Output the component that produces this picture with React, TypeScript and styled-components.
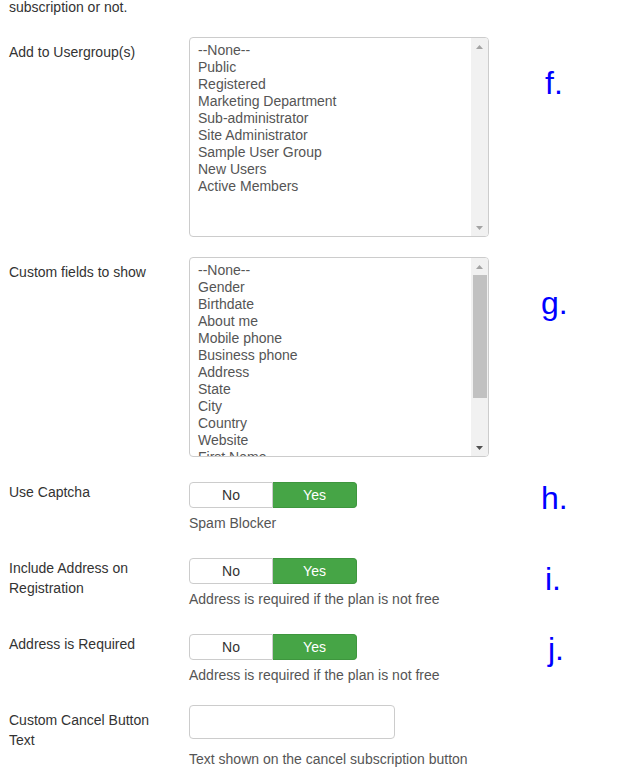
import React from 'react';
import styled, { createGlobalStyle } from 'styled-components';

const GlobalStyle = createGlobalStyle`
  body {
    margin: 0;
    background: #fff;
    font-family: 'Liberation Sans', Arial, sans-serif;
    font-size: 14px;
    color: #333;
  }
`;

const usergroups = [
  '--None--',
  'Public',
  'Registered',
  'Marketing Department',
  'Sub-administrator',
  'Site Administrator',
  'Sample User Group',
  'New Users',
  'Active Members',
];

// only the options that show inside the box; the rest sit below the scroll
const customFields = [
  '--None--',
  'Gender',
  'Birthdate',
  'About me',
  'Mobile phone',
  'Business phone',
  'Address',
  'State',
  'City',
  'Country',
  'Website',
  'First Name',
];

interface ListBoxProps {
  items: string[];
  thumb?: { top: number; height: number };
}

const ListBox: React.FC<ListBoxProps> = ({ items, thumb }) => (
  <ListFrame>
    <ListItems>
      {items.map((item) => (
        <ListItem key={item}>{item}</ListItem>
      ))}
    </ListItems>
    <ScrollBar>
      <ScrollArrow>
        <svg width="7" height="4" viewBox="0 0 7 4">
          <polygon points="0,4 3.5,0 7,4" fill="#a3a3a3" />
        </svg>
      </ScrollArrow>
      <ScrollTrack>
        {thumb && (
          <ScrollThumb style={{ marginTop: thumb.top, height: thumb.height }} />
        )}
      </ScrollTrack>
      <ScrollArrow>
        <svg width="7" height="4" viewBox="0 0 7 4">
          <polygon points="0,0 7,0 3.5,4" fill={thumb ? '#505050' : '#a3a3a3'} />
        </svg>
      </ScrollArrow>
    </ScrollBar>
  </ListFrame>
);

const Toggle: React.FC = () => (
  <ToggleGroup>
    <ToggleButton>No</ToggleButton>
    <ToggleButton $active>Yes</ToggleButton>
  </ToggleGroup>
);

const App: React.FC = () => (
  <Page>
    <GlobalStyle />
    <LeadLine>subscription or not.</LeadLine>

    <Row $gap={20}>
      <Label $pad={5}>Add to Usergroup(s)</Label>
      <Control>
        <ListBox items={usergroups} />
      </Control>
      <Mark $top={31} $left={56}>f.</Mark>
    </Row>

    <Row $gap={25}>
      <Label $pad={5}>Custom fields to show</Label>
      <Control>
        <ListBox items={customFields} thumb={{ top: 0, height: 123 }} />
      </Control>
      <Mark $top={31} $left={52}>g.</Mark>
    </Row>

    <Row $gap={25}>
      <Label $pad={0}>Use Captcha</Label>
      <Control>
        <Toggle />
        <Help $mt={5}>Spam Blocker</Help>
      </Control>
      <Mark $top={1} $left={52}>h.</Mark>
    </Row>

    <Row $gap={25}>
      <Label $pad={0}>Include Address on Registration</Label>
      <Control>
        <Toggle />
        <Help $mt={5}>Address is required if the plan is not free</Help>
      </Control>
      <Mark $top={6} $left={56}>i.</Mark>
    </Row>

    <Row $gap={20}>
      <Label $pad={0}>Address is Required</Label>
      <Control>
        <Toggle />
        <Help $mt={5}>Address is required if the plan is not free</Help>
      </Control>
      <Mark $top={0} $left={59}>j.</Mark>
    </Row>

    <Row $gap={0}>
      <Label $pad={5}>Custom Cancel Button Text</Label>
      <Control>
        <TextInput type="text" />
        <Help $mt={10}>Text shown on the cancel subscription button</Help>
      </Control>
    </Row>
  </Page>
);

export default App;

const Page = styled.div`
  padding-left: 9px;
  width: 624px;
  height: 775px;
  overflow: hidden;
`;

const LeadLine = styled.div`
  margin-top: -3px;
  line-height: 20px;
  margin-bottom: 20px;
  color: #333;
`;

const Row = styled.div<{ $gap: number }>`
  display: flex;
  align-items: flex-start;
  margin-bottom: ${(p) => p.$gap}px;
`;

const Label = styled.div<{ $pad: number }>`
  width: 160px;
  padding-right: 20px;
  padding-top: ${(p) => p.$pad}px;
  line-height: 20px;
  color: #333;
  flex-shrink: 0;
`;

const Control = styled.div`
  width: 300px;
  flex-shrink: 0;
  display: flex;
  flex-direction: column;
  align-items: flex-start;
`;

const Mark = styled.div<{ $top: number; $left: number }>`
  margin-top: ${(p) => p.$top}px;
  margin-left: ${(p) => p.$left}px;
  font-size: 32px;
  line-height: 31px;
  color: #0000ff;
`;

const ListFrame = styled.div`
  box-sizing: border-box;
  width: 300px;
  height: 200px;
  border: 1px solid #ccc;
  border-radius: 4px;
  display: flex;
  overflow: hidden;
  background: #fff;
`;

const ListItems = styled.div`
  flex: 1;
  padding: 4px 8px 0;
  overflow: hidden;
  color: #555;
`;

const ListItem = styled.div`
  line-height: 17px;
  white-space: nowrap;
`;

const ScrollBar = styled.div`
  width: 17px;
  background: #f1f1f1;
  display: flex;
  flex-direction: column;
`;

const ScrollArrow = styled.div`
  height: 17px;
  display: flex;
  align-items: center;
  justify-content: center;
`;

const ScrollTrack = styled.div`
  flex: 1;
  display: flex;
  flex-direction: column;
  align-items: center;
`;

const ScrollThumb = styled.div`
  width: 14px;
  background: #c1c1c1;
`;

const ToggleGroup = styled.div`
  display: flex;
  height: 26px;
`;

const ToggleButton = styled.div<{ $active?: boolean }>`
  box-sizing: border-box;
  width: 84px;
  height: 26px;
  display: flex;
  align-items: center;
  justify-content: center;
  font-size: 14px;
  border: 1px solid ${(p) => (p.$active ? '#3e963e' : '#ccc')};
  background: ${(p) => (p.$active ? '#46a546' : '#fff')};
  color: ${(p) => (p.$active ? '#fff' : '#333')};
  border-radius: ${(p) => (p.$active ? '0 4px 4px 0' : '4px 0 0 4px')};
  ${(p) => (p.$active ? 'border-left: none;' : '')}
`;

const Help = styled.div<{ $mt: number }>`
  margin-top: ${(p) => p.$mt}px;
  line-height: 20px;
  color: #555;
`;

const TextInput = styled.input`
  box-sizing: border-box;
  width: 206px;
  height: 34px;
  margin: 0;
  padding: 4px 6px;
  border: 1px solid #ccc;
  border-radius: 4px;
  font-family: 'Liberation Sans', Arial, sans-serif;
  font-size: 14px;
  outline: none;
`;
